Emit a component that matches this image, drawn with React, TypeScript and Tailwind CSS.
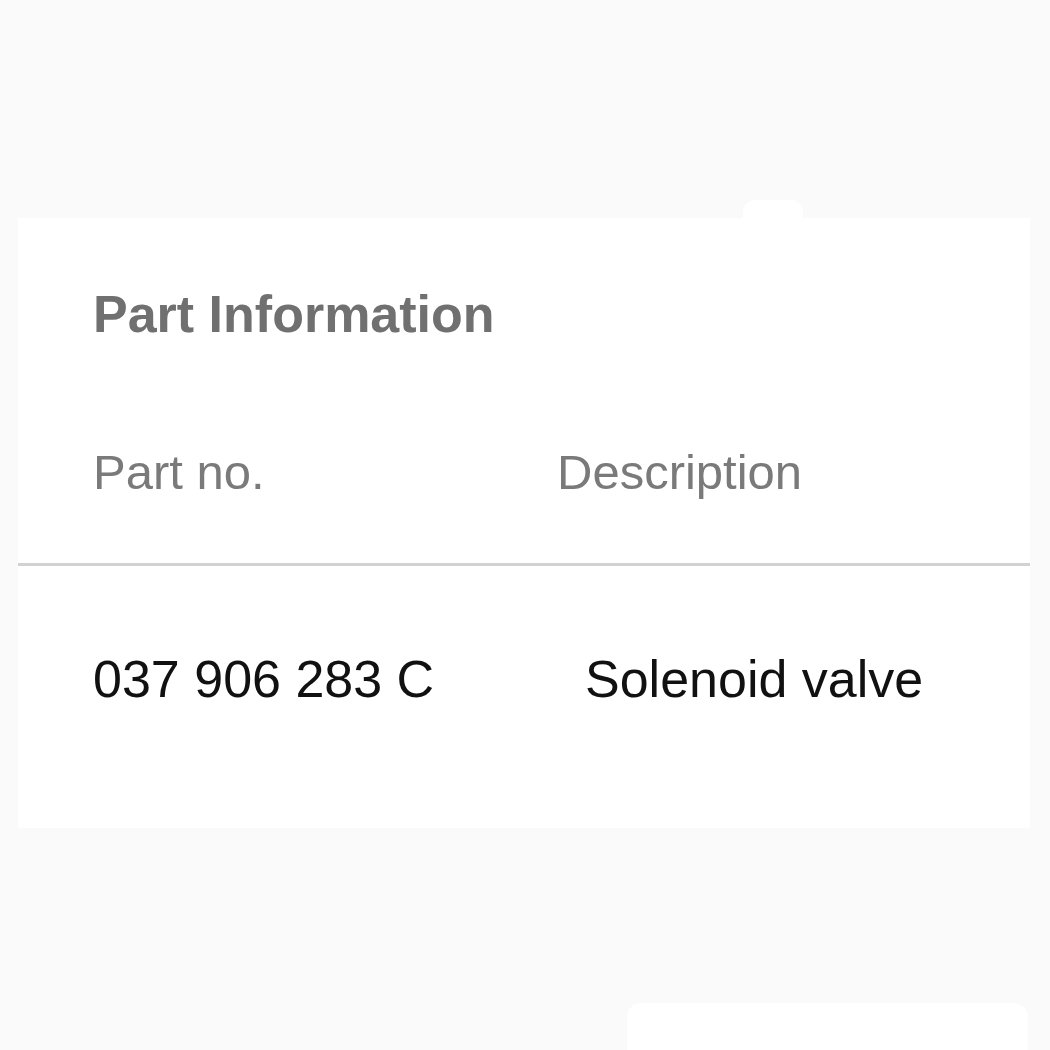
const font = { fontFamily: '"Liberation Sans", Arial, sans-serif' }

const rows = [{ partNo: '037 906 283 C', description: 'Solenoid valve' }]

export default function App() {
  return (
    <div className="min-h-[1050px] w-[1050px] overflow-hidden bg-[#fafafa]" style={font}>
      {/* bit of the next card peeking out above */}
      <div className="pt-[200px] pl-[743px]">
        <div className="h-[18px] w-[60px] rounded-t-[12px] bg-white" />
      </div>

      {/* Part information card */}
      <div className="ml-[18px] h-[610px] w-[1012px] bg-white pt-[70px]">
        <h2 className="pl-[75px] text-[52px] font-bold leading-[52px] text-[#707070]">
          Part Information
        </h2>

        <div className="mt-[108px] border-b-[3px] border-[#d2d2d2] pb-[66px] pl-[75px]">
          <div className="grid grid-cols-[464px_1fr] text-[49px] leading-[49px] text-[#7a7a7a]">
            <span>Part no.</span>
            <span>Description</span>
          </div>
        </div>

        {rows.map((row) => (
          <div
            key={row.partNo}
            className="mt-[87px] grid grid-cols-[464px_1fr] pl-[75px] text-[52px] leading-[52px] text-[#111111]"
          >
            <span>{row.partNo}</span>
            <span className="pl-[28px]">{row.description}</span>
          </div>
        ))}
      </div>

      {/* next card at the bottom */}
      <div className="mt-[175px] ml-[627px] h-[60px] w-[401px] rounded-t-[14px] bg-white" />
    </div>
  )
}
